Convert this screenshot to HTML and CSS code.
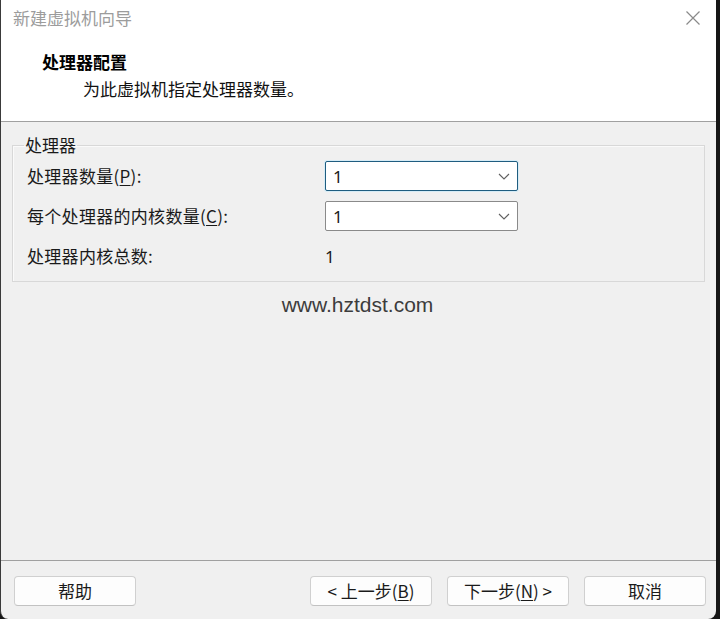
FILE: index.html
```html
<!DOCTYPE html>
<html lang="zh-CN">
<head>
<meta charset="utf-8">
<title>新建虚拟机向导</title>
<link rel="stylesheet" href="styles.css">
</head>
<body>
<div class="window">
  <div class="header">
    <div class="titlebar">
      <span class="title">新建虚拟机向导</span>
      <span class="close" aria-label="关闭">
        <svg width="16" height="16" viewBox="0 0 16 16"><path d="M1.5 1.5 L14.5 14.5 M14.5 1.5 L1.5 14.5" stroke="#8a8a8a" stroke-width="1.2" fill="none"/></svg>
      </span>
    </div>
    <div class="heading">处理器配置</div>
    <div class="desc">为此虚拟机指定处理器数量。</div>
  </div>
  <div class="content">
    <fieldset class="group">
      <legend>处理器</legend>
      <div class="rows">
        <div class="label">处理器数量(<u>P</u>):</div>
        <div class="select focused"><span>1</span><svg width="12" height="7" viewBox="0 0 12 7"><path d="M1 1 L6 6 L11 1" stroke="#606060" stroke-width="1.1" fill="none"/></svg></div>
        <div class="label">每个处理器的内核数量(<u>C</u>):</div>
        <div class="select"><span>1</span><svg width="12" height="7" viewBox="0 0 12 7"><path d="M1 1 L6 6 L11 1" stroke="#606060" stroke-width="1.1" fill="none"/></svg></div>
        <div class="label">处理器内核总数:</div>
        <div class="value">1</div>
      </div>
    </fieldset>
    <div class="watermark">www.hztdst.com</div>
  </div>
  <div class="footer">
    <button class="btn">帮助</button>
    <div class="spacer"></div>
    <button class="btn">&lt; 上一步(<u>B</u>)</button>
    <button class="btn">下一步(<u>N</u>) &gt;</button>
    <button class="btn">取消</button>
  </div>
</div>
</body>
</html>
```
FILE: styles.css
```css
html, body {
  margin: 0;
  padding: 0;
  background: #161616;
}
body {
  width: 720px;
  height: 619px;
  overflow: hidden;
  font-family: "Noto Sans CJK SC", "Noto Sans", sans-serif;
  font-size: 17px;
  color: #1a1a1a;
}
.window {
  width: 716px;
  height: 619px;
  box-sizing: border-box;
  border-left: 1px solid #3a3a3a;
  background: #f0f0f0;
  display: flex;
  flex-direction: column;
  border-bottom-left-radius: 8px;
  border-bottom-right-radius: 8px;
  overflow: hidden;
}
.header {
  background: #ffffff;
  height: 122px;
  box-sizing: border-box;
  border-bottom: 1px solid #a0a0a0;
}
.titlebar {
  height: 36px;
  display: flex;
  align-items: center;
  justify-content: space-between;
  padding: 0 13px 0 12px;
}
.title {
  color: #9c9c9c;
  font-size: 17px;
  line-height: 20px;
}
.close {
  display: flex;
  width: 16px;
  height: 16px;
  margin-right: 2px;
}
.heading {
  margin-top: 15px;
  padding-left: 41px;
  font-weight: bold;
  font-size: 17px;
  line-height: 22px;
  color: #000;
}
.desc {
  margin-top: 5px;
  padding-left: 82px;
  font-size: 17px;
  line-height: 22px;
  color: #111;
}
.content {
  flex: 1;
  display: flex;
  flex-direction: column;
}
.group {
  margin: 13px 11px 0 11px;
  padding: 6px 14px 10px 14px;
  border: 1px solid #d8d8d8;
  box-shadow: inset 1px 1px 0 #fafafa;
  min-width: 0;
}
.group legend {
  padding: 0 1px;
  margin-left: -3px;
  font-size: 17px;
  line-height: 20px;
}
.rows {
  display: grid;
  grid-template-columns: 298px 193px;
  grid-auto-rows: 30px;
  row-gap: 10px;
  align-items: center;
}
.label {
  line-height: 20px;
  letter-spacing: 0.3px;
}
.label u, .btn u {
  text-underline-offset: 2px;
}
.select {
  height: 30px;
  box-sizing: border-box;
  border: 1px solid #8a8a8a;
  border-radius: 2px;
  background: #fff;
  display: flex;
  align-items: center;
  justify-content: space-between;
  padding: 0 7px 0 7px;
  font-family: "Noto Sans", sans-serif;
  font-size: 17px;
}
.select.focused {
  border-color: #1f5d80;
  box-shadow: 0 0 0 1px #d6ecf6;
}
.value {
  font-family: "Noto Sans", sans-serif;
  font-size: 17px;
}
.watermark {
  margin-top: 11px;
  text-align: center;
  font-family: "Liberation Sans", Arial, sans-serif;
  font-size: 21px;
  line-height: 24px;
  color: #3c3c3c;
  padding-right: 2px;
}
.footer {
  border-top: 1px solid #a0a0a0;
  height: 59px;
  box-sizing: border-box;
  padding: 15px 10px 0 13px;
  display: flex;
  align-items: flex-start;
  gap: 15px;
}
.spacer {
  flex: 1;
}
.btn {
  width: 122px;
  height: 30px;
  box-sizing: border-box;
  border: 1px solid #d0d0d0;
  border-bottom-color: #c2c2c2;
  border-radius: 4px;
  background: #fdfdfd;
  font-family: "Noto Sans CJK SC", "Noto Sans", sans-serif;
  font-size: 17px;
  line-height: 20px;
  color: #1a1a1a;
  padding: 0;
}
```
